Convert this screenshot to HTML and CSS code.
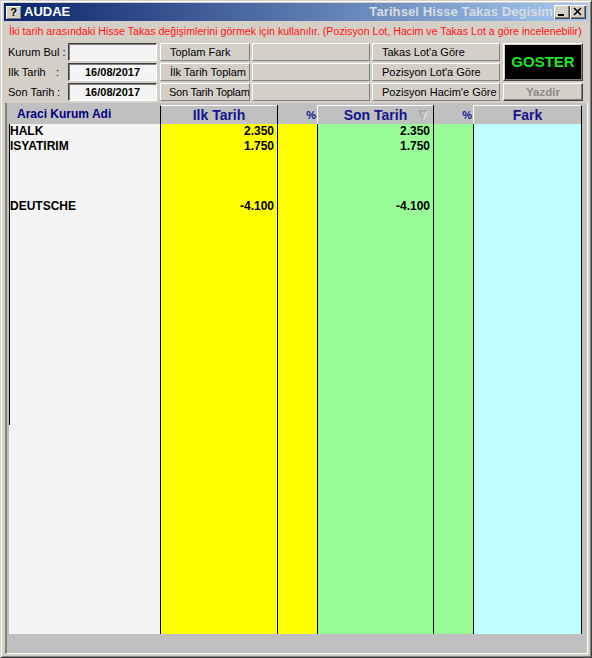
FILE: index.html
```html
<!DOCTYPE html>
<html>
<head>
<meta charset="utf-8">
<link rel="stylesheet" href="styles.css">
</head>
<body>
<div class="window">
  <div class="titlebar">
    <span class="help">?</span>
    <span class="app">AUDAE</span>
    <span class="spacer"></span>
    <span class="caption">Tarihsel Hisse Takas Degisim</span>
    <span class="tbtn"><svg width="16" height="14" viewBox="0 0 16 14"><rect x="4" y="9" width="6" height="2" fill="#000"/></svg></span>
    <span class="tbtn"><svg width="16" height="14" viewBox="0 0 16 14"><path d="M4 3 L11 10 M11 3 L4 10" stroke="#000" stroke-width="1.6"/></svg></span>
  </div>
  <div class="hint">İki tarih arasındaki Hisse Takas değişimlerini görmek için kullanılır. (Pozisyon Lot, Hacim ve Takas Lot a göre incelenebilir)</div>
  <div class="controls">
    <div class="col labels">
      <div class="lbl">Kurum Bul :</div>
      <div class="lbl"><span>Ilk Tarih</span><span class="colon">:</span></div>
      <div class="lbl"><span>Son Tarih</span><span class="colon c2">:</span></div>
    </div>
    <div class="col inputs">
      <div class="inp"></div>
      <div class="inp">16/08/2017</div>
      <div class="inp">16/08/2017</div>
    </div>
    <div class="col btns1">
      <div class="btn">Toplam Fark</div>
      <div class="btn">İlk Tarih Toplam</div>
      <div class="btn tight">Son Tarih Toplam</div>
    </div>
    <div class="col blanks">
      <div class="btn"></div>
      <div class="btn"></div>
      <div class="btn"></div>
    </div>
    <div class="col btns2">
      <div class="btn">Takas Lot'a Göre</div>
      <div class="btn">Pozisyon Lot'a Göre</div>
      <div class="btn">Pozisyon Hacim'e Göre</div>
    </div>
    <div class="col actions">
      <div class="goster">GOSTER</div>
      <div class="yazdir">Yazdir</div>
    </div>
  </div>
  <div class="grid">
    <div class="gcol names">
      <div class="hd hd-names">Araci Kurum Adi</div>
      <div class="bd bd-names">
        <div class="row">HALK</div>
        <div class="row">ISYATIRIM</div>
        <div class="row"></div>
        <div class="row"></div>
        <div class="row"></div>
        <div class="row">DEUTSCHE</div>
      </div>
    </div>
    <div class="gcol ilk">
      <div class="hd hd-ilk">Ilk Tarih</div>
      <div class="bd yellow">
        <div class="row num">2.350</div>
        <div class="row num">1.750</div>
        <div class="row"></div>
        <div class="row"></div>
        <div class="row"></div>
        <div class="row num">-4.100</div>
      </div>
    </div>
    <div class="gcol pct">
      <div class="hd hd-pct">%</div>
      <div class="bd yellow"></div>
    </div>
    <div class="gcol son">
      <div class="hd hd-son">Son Tarih <svg class="sort" width="11" height="10" viewBox="0 0 11 10"><path d="M1 1 L10 1 L5.5 9 Z" fill="none" stroke="#9a9a9a" stroke-width="1"/><path d="M5.5 9 L10 1" stroke="#ffffff" stroke-width="1"/></svg></div>
      <div class="bd green">
        <div class="row num">2.350</div>
        <div class="row num">1.750</div>
        <div class="row"></div>
        <div class="row"></div>
        <div class="row"></div>
        <div class="row num">-4.100</div>
      </div>
    </div>
    <div class="gcol pct">
      <div class="hd hd-pct">%</div>
      <div class="bd green"></div>
    </div>
    <div class="gcol fark">
      <div class="hd hd-fark">Fark</div>
      <div class="bd cyan"></div>
    </div>
  </div>
</div>
</body>
</html>
```
FILE: styles.css
```css
* { box-sizing: border-box; }
html, body { margin: 0; padding: 0; background: #d4d0c8; }
body { font-family: "Liberation Sans", Arial, sans-serif; }

.window {
  width: 592px;
  height: 658px;
  border: 1px solid;
  border-color: #d4d0c8 #404040 #404040 #d4d0c8;
  box-shadow: inset 1px 1px #ffffff, inset -1px -1px #808080;
  padding: 2px 3px 3px 3px;
  display: flex;
  flex-direction: column;
  background: #d4d0c8;
}

.titlebar {
  height: 18px;
  display: flex;
  align-items: center;
  background: linear-gradient(to right, #0a246a, #a6caf0);
  flex: none;
}
.help {
  width: 15px;
  height: 13px;
  margin-left: 2px;
  background: #d4d0c8;
  box-shadow: inset 1px 1px #ffffff, inset -1px -1px #808080;
  font: bold 11px/13px "Liberation Sans", Arial, sans-serif;
  text-align: center;
  color: #000;
}
.app {
  margin-left: 3px;
  color: #ffffff;
  font: bold 13px/18px "Liberation Sans", Arial, sans-serif;
}
.spacer { flex: 1; }
.caption {
  white-space: nowrap;
  margin-right: 1px;
  color: #d8dce0;
  font: bold 13px/18px "Liberation Sans", Arial, sans-serif;
  letter-spacing: 0.1px;
}
.tbtn {
  width: 16px;
  height: 14px;
  background: #d4d0c8;
  box-shadow: inset 1px 1px #ffffff, inset -1px -1px #404040, inset -2px -2px #808080;
  display: flex;
}
.tbtn + .tbtn { margin-right: 2px; }

.hint {
  height: 20px;
  line-height: 20px;
  padding-left: 5px;
  color: #ff1010;
  font-size: 10.65px;
  white-space: nowrap;
  flex: none;
}

.controls {
  display: flex;
  margin-top: 2px;
  flex: none;
}
.col {
  display: flex;
  flex-direction: column;
  gap: 2px;
}
.labels { width: 64px; }
.lbl {
  height: 18px;
  line-height: 18px;
  font-size: 11px;
  padding-left: 4px;
  padding-right: 9px;
  display: flex;
  justify-content: space-between;
  white-space: nowrap;
}
.lbl .c2 { margin-right: -1px; }
.inputs { width: 89px; }
.inp {
  height: 18px;
  background: #f4f4f4;
  border: 1px solid;
  border-color: #404040 #ffffff #ffffff #404040;
  box-shadow: inset 1px 1px #808080;
  font: bold 11px/16px "Liberation Sans", Arial, sans-serif;
  text-align: center;
}
.btns1 { width: 90px; margin-left: 3px; }
.blanks { width: 118px; margin-left: 2px; }
.btns2 { width: 128px; margin-left: 2px; }
.btn {
  height: 18px;
  background: #d4d0c8;
  border: 1px solid;
  border-color: #ffffff #808080 #808080 #ffffff;
  font-size: 11px;
  line-height: 16px;
  padding-left: 9px;
  white-space: nowrap;
  overflow: hidden;
}
.btn.tight { padding-left: 8px; letter-spacing: -0.25px; }
.actions { width: 80px; margin-left: 3px; }
.goster {
  height: 38px;
  background: #000;
  border: 1px solid;
  border-color: #ffffff #404040 #404040 #ffffff;
  box-shadow: inset -1px -1px #808080, inset 1px 1px #d4d0c8;
  color: #1ee61e;
  font: bold 15px/36px "Liberation Sans", Arial, sans-serif;
  text-align: center;
}
.yazdir {
  height: 18px;
  background: #d4d0c8;
  border: 1px solid;
  border-color: #ffffff #404040 #404040 #ffffff;
  box-shadow: inset -1px -1px #808080;
  color: #8a8a8a;
  font: bold 11.5px/16px "Liberation Sans", Arial, sans-serif;
  text-align: center;
}

.grid {
  flex: 1;
  margin-top: 2px;
  margin-left: 1px;
  background: #c0c0c0;
  border-left: 2px solid #808080;
  border-right: 1px solid #ffffff;
  border-bottom: 1px solid #ffffff;
  padding-top: 2px;
  padding-left: 2px;
  display: flex;
  align-items: flex-start;
}
.gcol { display: flex; flex-direction: column; }
.names { width: 151px; }
.ilk { width: 117px; }
.pct { width: 40px; }
.son { width: 116px; }
.fark { width: 109px; }

.hd {
  height: 19px;
  font: bold 14px/18px "Liberation Sans", Arial, sans-serif;
  color: #14148c;
  text-align: center;
  white-space: nowrap;
  position: relative;
}
.hd-names {
  font-size: 12px;
  color: #000080;
  text-align: left;
  padding-left: 8px;
  line-height: 19px;
}
.hd-ilk { border-left: 1px solid #000; border-top: 1px solid #fff; }
.hd-son { border-left: 1px solid #fff; border-top: 1px solid #fff; }
.hd-fark { border-left: 1px solid #fff; border-top: 1px solid #fff; border-right: 1px solid #000; }
.hd-pct {
  border-left: 1px solid #000;
  text-align: right;
  padding-right: 1px;
  font-size: 11px;
  line-height: 20px;
}
.sort { position: absolute; right: 4px; top: 4px; }

.bd {
  height: 510px;
  border-left: 1px solid #000;
}
.bd-names {
  border-left: none;
  background: linear-gradient(#000, #000) left top / 1px 301px no-repeat, #f4f4f4;
  padding-left: 1px;
}
.yellow { background: #ffff00; }
.green { background: #98fb98; }
.cyan { background: #c0ffff; border-right: 1px solid #000; }

.row {
  height: 15px;
  font: bold 12px/15px "Liberation Sans", Arial, sans-serif;
  color: #000;
  white-space: nowrap;
}
.num { text-align: right; padding-right: 3px; }
```
